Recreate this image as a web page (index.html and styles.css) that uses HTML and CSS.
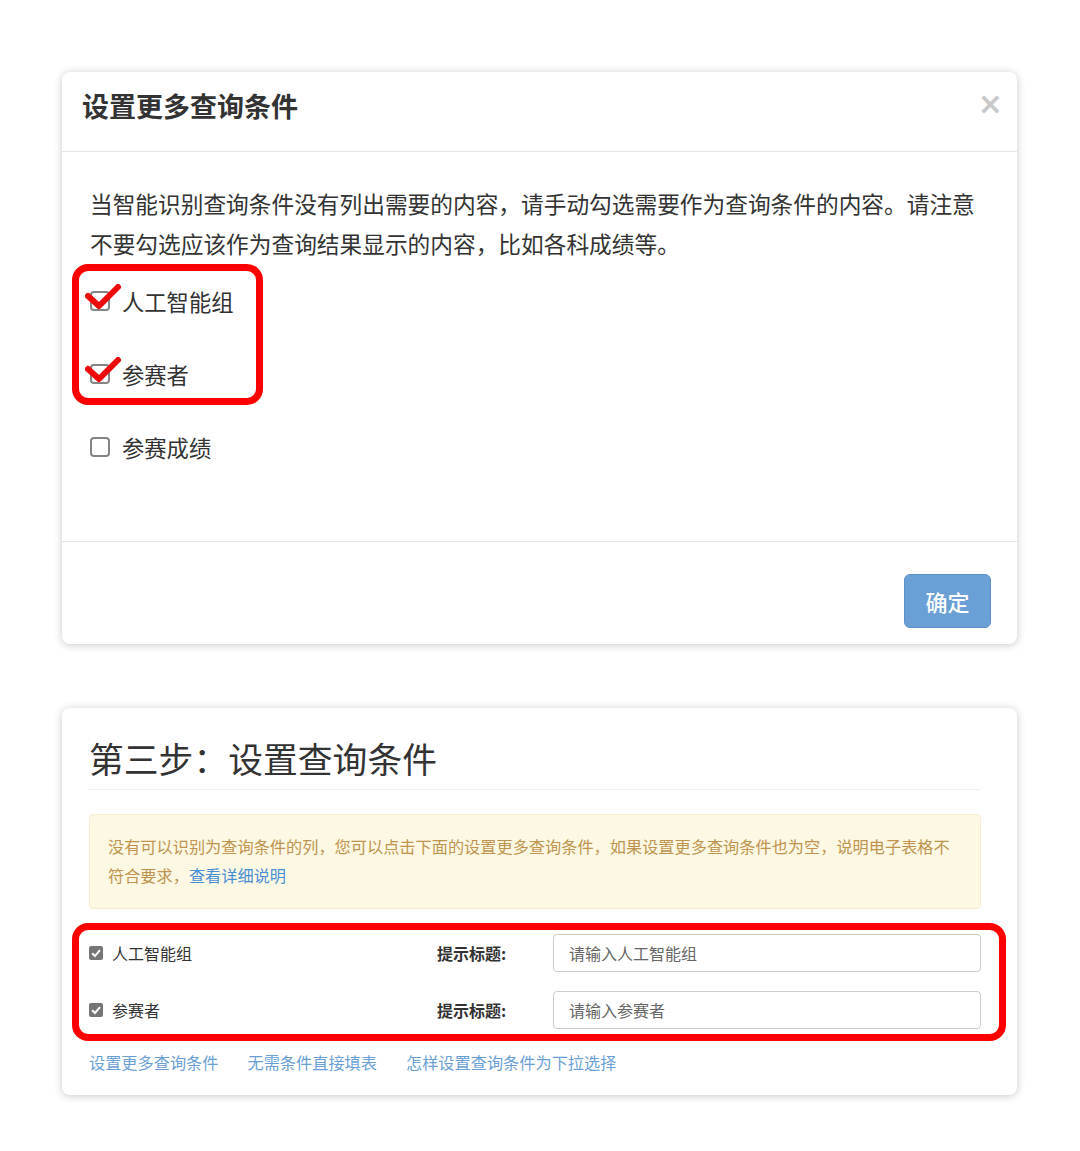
FILE: index.html
```html
<!DOCTYPE html>
<html lang="zh-CN">
<head>
    <title>设置查询条件</title>
    <meta charset="UTF-8">
    <meta name="viewport" content="width=device-width, initial-scale=1.0">
    <link rel="stylesheet" href="styles.css">
</head>
<body>
    <div class="page">
        <div class="modal">
            <div class="modal-header">
                <h4 class="modal-title">设置更多查询条件</h4>
                <span class="close">×</span>
            </div>
            <div class="modal-body">
                <p class="intro">当智能识别查询条件没有列出需要的内容，请手动勾选需要作为查询条件的内容。请注意不要勾选应该作为查询结果显示的内容，比如各科成绩等。</p>
                <label class="check-row"><span class="box"></span>人工智能组</label>
                <label class="check-row"><span class="box"></span>参赛者</label>
                <label class="check-row"><span class="box"></span>参赛成绩</label>

                <!-- hand drawn marks on the screenshot -->
                <div class="mark mark-modal"></div>
                <svg class="tick tick-1" width="40" height="30" viewBox="0 0 40 30">
                    <path d="M3 12 L14 22 L33 3" fill="none" stroke="#ee0a0a" stroke-width="6" stroke-linecap="round" stroke-linejoin="round"/>
                </svg>
                <svg class="tick tick-2" width="40" height="30" viewBox="0 0 40 30">
                    <path d="M3 12 L14 22 L33 3" fill="none" stroke="#ee0a0a" stroke-width="6" stroke-linecap="round" stroke-linejoin="round"/>
                </svg>
            </div>
            <div class="modal-footer">
                <button class="btn-primary">确定</button>
            </div>
        </div>

        <div class="panel">
            <h2 class="step-title">第三步：设置查询条件</h2>
            <div class="alert">没有可以识别为查询条件的列，您可以点击下面的设置更多查询条件，如果设置更多查询条件也为空，说明电子表格不符合要求，<a href="#">查看详细说明</a></div>

            <div class="fields">
                <div class="field-row">
                    <label class="field-check"><span class="mini-box"><svg width="14" height="14" viewBox="0 0 14 14"><path d="M3.2 7.2 L6 10 L11 4.2" fill="none" stroke="#fff" stroke-width="2"/></svg></span>人工智能组</label>
                    <span class="field-label">提示标题:</span>
                    <input class="field-input" type="text" placeholder="请输入人工智能组">
                </div>
                <div class="field-row">
                    <label class="field-check"><span class="mini-box"><svg width="14" height="14" viewBox="0 0 14 14"><path d="M3.2 7.2 L6 10 L11 4.2" fill="none" stroke="#fff" stroke-width="2"/></svg></span>参赛者</label>
                    <span class="field-label">提示标题:</span>
                    <input class="field-input" type="text" placeholder="请输入参赛者">
                </div>
                <div class="mark mark-fields"></div>
            </div>

            <div class="links">
                <a href="#">设置更多查询条件</a>
                <a href="#">无需条件直接填表</a>
                <a href="#">怎样设置查询条件为下拉选择</a>
            </div>
        </div>
    </div>
</body>
</html>
```

FILE: styles.css
```css
body {
    margin: 0;
    background-color: #fff;
    font-family: "Noto Sans CJK SC", "Noto Sans", sans-serif;
    color: #333;
}

.page {
    width: 955px;
    padding: 72px 0 40px 62px;
}

/* ---------- modal ---------- */

.modal {
    background-color: #fff;
    border-radius: 8px;
    box-shadow: 0 1px 8px rgba(0, 0, 0, 0.22);
}

.modal-header {
    display: flex;
    justify-content: space-between;
    align-items: flex-start;
    padding: 16px 14px 27px 20px;
    border-bottom: 1px solid #e5e5e5;
}

.modal-title {
    margin: 0;
    font-size: 27px;
    line-height: 36px;
    font-weight: 700;
    color: #333;
}

.close {
    font-size: 30px;
    line-height: 32px;
    color: #c8c8c8;
    font-family: "DejaVu Sans", sans-serif;
    font-weight: 700;
}

.modal-body {
    position: relative;
    padding: 32px 30px 58px 28px;
    border-bottom: 1px solid #e5e5e5;
}

.intro {
    margin: 0;
    font-size: 22.7px;
    line-height: 40px;
    color: #333;
}

.check-row {
    display: flex;
    align-items: center;
    height: 73px;
    font-size: 22.3px;
    color: #333;
}

.box {
    width: 16px;
    height: 16px;
    border: 2px solid #858585;
    border-radius: 4px;
    margin-right: 12px;
}

.tick {
    position: absolute;
    left: 23px;
}

.tick-1 {
    top: 132px;
}

.tick-2 {
    top: 205px;
}

.mark {
    position: absolute;
    border: 7px solid #f00;
    border-radius: 16px;
}

.mark-modal {
    left: 10px;
    top: 112px;
    width: 177px;
    height: 127px;
}

.modal-footer {
    display: flex;
    justify-content: flex-end;
    padding: 32px 26px 16px;
}

.btn-primary {
    width: 87px;
    height: 54px;
    border: 1px solid #5b90c9;
    border-radius: 6px;
    background-color: #6ba0d7;
    color: #fff;
    font-family: inherit;
    font-size: 22px;
    font-weight: 500;
}

/* ---------- panel ---------- */

.panel {
    margin-top: 64px;
    padding: 28px 36px 21px 27px;
    background-color: #fff;
    border-radius: 8px;
    box-shadow: 0 1px 8px rgba(0, 0, 0, 0.22);
}

.step-title {
    margin: 0;
    padding-bottom: 9px;
    font-size: 34.8px;
    line-height: 44px;
    font-weight: 400;
    color: #333;
    border-bottom: 1px solid #eee;
}

.alert {
    margin-top: 24px;
    padding: 17px 18px 18px;
    background-color: #fcf8e3;
    border: 1px solid #f8eccf;
    border-radius: 4px;
    color: #c0944f;
    font-size: 16.2px;
    line-height: 29px;
}

.alert a {
    color: #4a8fd6;
    text-decoration: none;
}

.fields {
    position: relative;
    margin-top: 25px;
    display: flex;
    flex-direction: column;
    gap: 19px;
}

.field-row {
    display: grid;
    grid-template-columns: 348px 116px 1fr;
    align-items: center;
}

.field-check {
    display: flex;
    align-items: center;
    font-size: 16px;
    color: #333;
}

.mini-box {
    display: flex;
    width: 14px;
    height: 14px;
    margin-right: 9px;
    border-radius: 2px;
    background-color: #767676;
}

.field-label {
    font-size: 16px;
    font-weight: 700;
    color: #333;
}

.field-input {
    height: 38px;
    box-sizing: border-box;
    padding: 0 15px;
    border: 1px solid #ccc;
    border-radius: 4px;
    font-family: inherit;
    font-size: 16px;
    color: #333;
}

.field-input::placeholder {
    color: #666;
}

.mark-fields {
    left: -17px;
    top: -11px;
    width: 920px;
    height: 104px;
}

.links {
    display: flex;
    gap: 29px;
    margin-top: 21px;
    font-size: 16.2px;
    line-height: 24px;
}

.links a {
    color: #6a9fd6;
    text-decoration: none;
}
```
